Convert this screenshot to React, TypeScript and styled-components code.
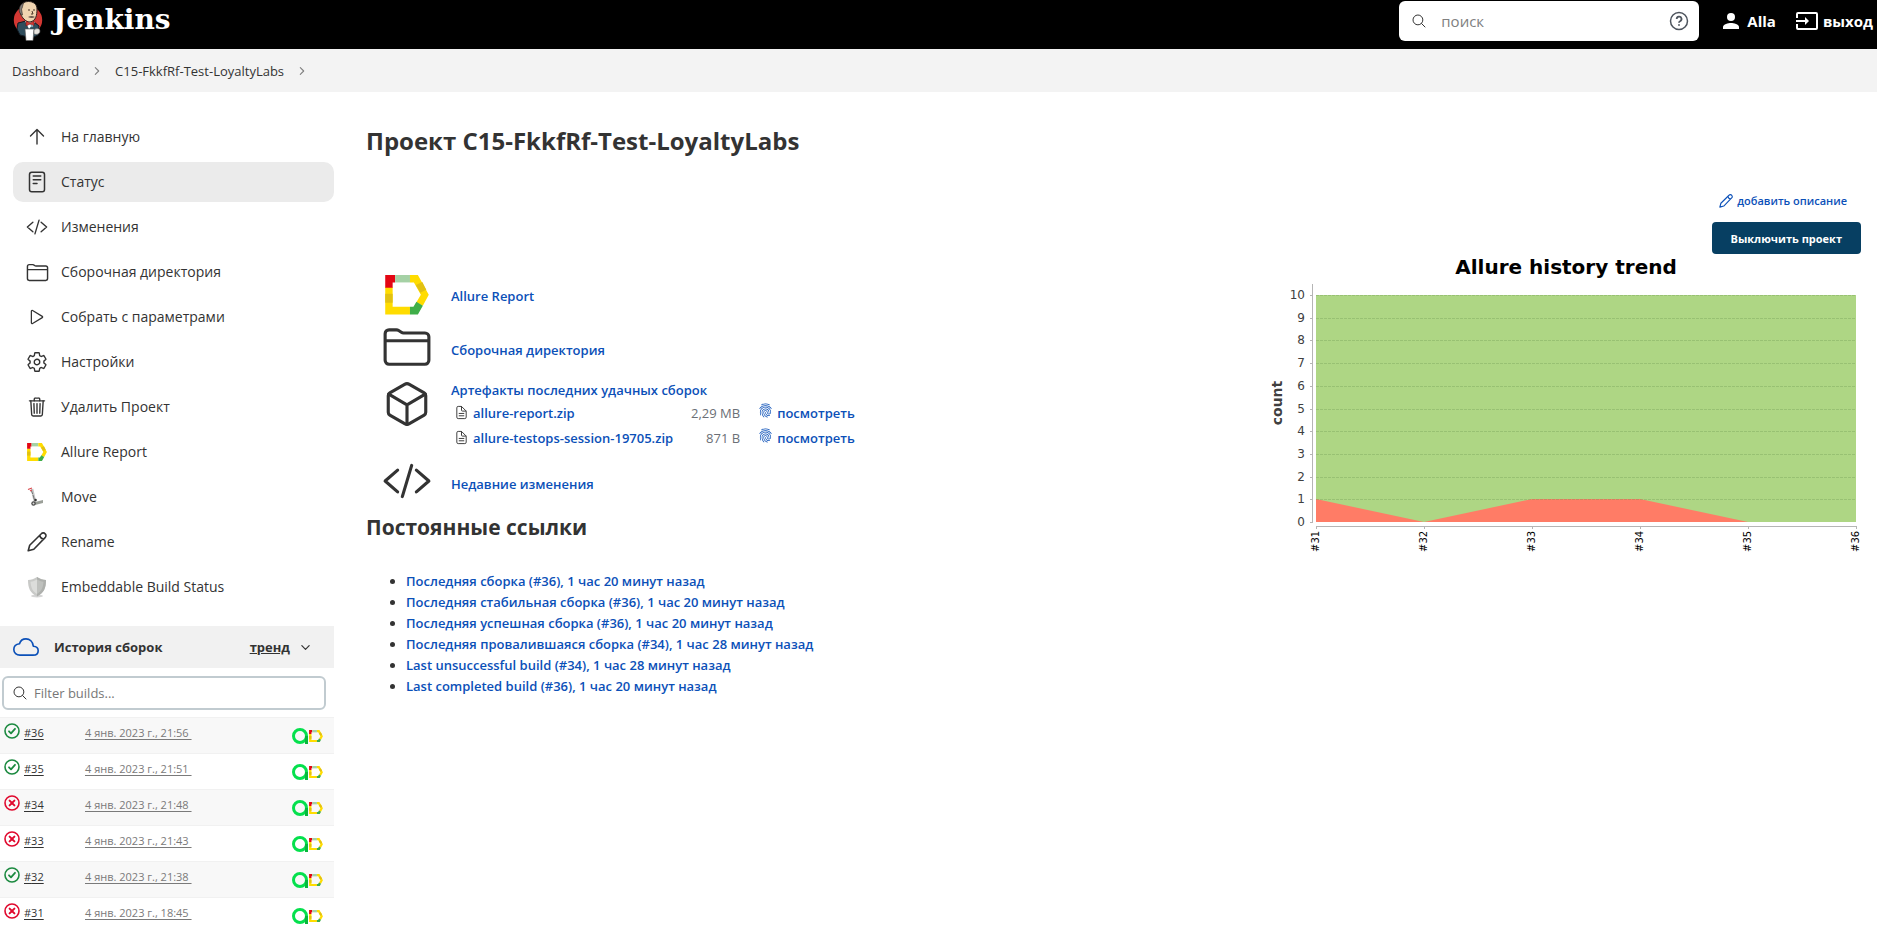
import React from 'react';
import styled, { createGlobalStyle } from 'styled-components';
import {
  IoReaderOutline,
  IoCodeSlashOutline,
  IoFolderOutline,
  IoPlayOutline,
  IoSettingsOutline,
  IoTrashOutline,
  IoCubeOutline,
  IoDocumentTextOutline,
  IoFingerPrintOutline,
  IoSearchOutline,
  IoCloudOutline,
  IoChevronForwardOutline,
  IoChevronDownOutline,
} from 'react-icons/io5';

const text = '#333333';
const link = '#0b50b8';

const GlobalStyle = createGlobalStyle`
  *, *::before, *::after { box-sizing: border-box; }
  body {
    margin: 0;
    background: #fff;
    color: ${text};
    font-family: "Open Sans", "Noto Sans", sans-serif;
    font-size: 13px;
    line-height: 20px;
  }
  a { color: inherit; text-decoration: none; }
  svg { display: block; flex: none; }
  input, button { font-family: inherit; }
`;

/* Header */

const TopBar = styled.header`
  display: flex;
  align-items: flex-start;
  height: 49px;
  padding: 0 4px 0 12px;
  background: #000;
  color: #fff;
`;

const Brand = styled.a`
  display: flex;
  gap: 9px;
  margin-right: auto;
  font-family: "DejaVu Serif", serif;
  font-size: 28px;
  font-weight: 700;
  line-height: 40px;
`;

const SearchForm = styled.form`
  display: flex;
  align-items: center;
  gap: 14px;
  width: 300px;
  height: 40px;
  margin-top: 1px;
  padding: 0 10px 0 12px;
  border-radius: 6px;
  background: #fff;
  color: ${text};
`;

const SearchInput = styled.input`
  flex: 1;
  min-width: 0;
  padding: 0;
  border: 0;
  outline: 0;
  background: none;
  font-size: 15px;
  &::placeholder { color: #808080; opacity: 1; }
`;

const HelpButton = styled.button`
  padding: 0;
  border: 0;
  background: none;
`;

const UserNav = styled.nav`
  display: flex;
  gap: 20px;
  margin-left: 24px;
  padding-top: 11px;
  font-size: 15px;
  font-weight: 700;
`;

const UserLink = styled.a<{ $gap: number }>`
  display: flex;
  align-items: center;
  gap: ${(p) => p.$gap}px;
`;

const Breadcrumbs = styled.nav`
  display: flex;
  align-items: center;
  gap: 12px;
  height: 43px;
  padding: 0 12px;
  background: #f3f3f3;
  svg { color: #808080; }
`;

/* Page */

const Page = styled.div`
  display: grid;
  grid-template-columns: 334px minmax(0, 1fr);
`;

const Tasks = styled.nav`
  display: flex;
  flex-direction: column;
  gap: 5px;
  padding: 25px 0 19px 13px;
`;

const Task = styled.a<{ $active?: boolean }>`
  display: flex;
  align-items: center;
  gap: 12px;
  height: 40px;
  padding: 0 12px;
  border-radius: 10px;
  font-size: 14px;
  background: ${(p) => (p.$active ? '#ebebeb' : 'transparent')};
`;

const IconBox = styled.span`
  display: flex;
  justify-content: center;
  width: 24px;
`;

const HistoryHead = styled.div`
  display: flex;
  align-items: center;
  height: 42px;
  padding: 0 22px 0 13px;
  background: #f1f1f1;
  font-weight: 700;
  svg:first-child { color: ${link}; margin-right: 15px; }
`;

const TrendLink = styled.a`
  margin: 0 9px 0 auto;
  text-decoration: underline;
`;

const FilterBox = styled.label`
  display: flex;
  align-items: center;
  gap: 6px;
  height: 34px;
  margin: 8px 8px 7px 2px;
  padding: 0 8px;
  border: 2px solid #c1cbd0;
  border-radius: 6px;
`;

const FilterInput = styled.input`
  flex: 1;
  min-width: 0;
  padding: 0;
  border: 0;
  outline: 0;
  background: none;
  font-size: 13px;
  &::placeholder { color: #777; opacity: 1; }
`;

const BuildTable = styled.table`
  width: 100%;
  border-collapse: collapse;
  font-size: 11px;
  line-height: 16px;
`;

const BuildRow = styled.tr`
  height: 36px;
  border-top: 1px solid #f1f1f1;
  &:nth-child(odd) { background: #f8f8f8; }
  td { padding: 5px 0 0; vertical-align: top; }
`;

const BuildName = styled.td`
  width: 85px;
`;

const BuildLabel = styled.span`
  display: flex;
  align-items: flex-start;
  gap: 4px;
  padding-left: 4px;
`;

const BuildLink = styled.a<{ $muted?: boolean }>`
  display: inline-block;
  padding-top: 2px;
  color: ${(p) => (p.$muted ? '#7a7a7a' : text)};
  text-decoration: underline;
  text-underline-offset: 2px;
`;

const Badges = styled.span`
  display: flex;
  justify-content: flex-end;
  align-items: center;
  gap: 1px;
  padding: 5px 11px 0 0;
`;

/* Project panel */

const Main = styled.main`
  padding: 33px 11px 0 32px;
`;

const Title = styled.h1`
  margin: 0 0 33px;
  font-size: 24px;
  font-weight: 700;
  line-height: 32px;
`;

const Body = styled.div`
  display: grid;
  grid-template-columns: minmax(0, 1fr) 600px;
`;

const Overview = styled.section`
  padding-top: 79px;
`;

const Entry = styled.div<{ $top?: boolean }>`
  display: flex;
  align-items: ${(p) => (p.$top ? 'flex-start' : 'center')};
  gap: 18px;
  min-height: 52px;
  padding: ${(p) => (p.$top ? '5px 0 5px 15px' : '0 0 0 15px')};
`;

const BigIcon = styled.span`
  display: flex;
  justify-content: center;
  align-items: center;
  width: 52px;
  height: 52px;
`;

const Label = styled.div<{ $drop: number }>`
  padding-top: ${(p) => p.$drop}px;
`;

const Link = styled.a`
  color: ${link};
  font-weight: 600;
`;

const Files = styled.table`
  border-collapse: collapse;
  tr { height: 25px; }
  td { padding: 0; }
`;

const FileIcon = styled.td`
  width: 22px;
  svg { margin-left: 3px; }
`;

const FileSize = styled.td`
  width: 67px;
  text-align: right;
  color: #6b6f76;
`;

const Inspect = styled(Link)`
  display: flex;
  align-items: flex-start;
  gap: 4px;
  margin-left: 18px;
`;

const SubTitle = styled.h2`
  margin: 5px 0 29px;
  font-size: 21px;
  font-weight: 700;
  line-height: 30px;
`;

const Permalinks = styled.ul`
  margin: 0;
  padding-left: 40px;
  line-height: 21px;
`;

const Side = styled.aside`
  display: flex;
  flex-direction: column;
  align-items: flex-end;
`;

const EditLink = styled(Link)`
  display: flex;
  align-items: center;
  gap: 4px;
  height: 22px;
  margin: 0 19px 10px 0;
  font-size: 11px;
`;

const DisableButton = styled.button`
  height: 32px;
  margin-right: 5px;
  padding: 0 19px;
  border: 0;
  border-radius: 4px;
  background: #073f62;
  color: #fff;
  font-size: 11px;
  font-weight: 700;
`;

/* Icons */

const Butler = () => (
  <svg width="32" height="42" viewBox="0 0 32 42" aria-hidden="true">
    <circle cx="16" cy="20" r="14.2" fill="#d33833" />
    <path d="M6 23l8-2 8 1 5 4-1 9-6 3-12-3-3-6z" fill="#2f4d5c" stroke="#101820" />
    <path d="M13 21l4 8 6-7-3-1z" fill="#fff" />
    <path d="M8 9c0-5 4-7.500 8.500-7.500S25 4 25 9c0 6-1 12-7 13-5 0-8-5-9.500-8z" fill="#efd4b0" stroke="#2b2320" />
    <path d="M7.500 12c-1-4 1-8 4-9-1 3-1 5-2 6l1 6c-1 0-2-1-3-3z" fill="#827c78" stroke="#2b2320" strokeWidth=".6" />
    <path d="M16 10h2M21 10h2M20 11l1 3h-2" stroke="#4a3728" fill="none" />
    <path d="M16 17c2-1.500 5-1.500 7 0-2 1.500-5 1-7 0z" fill="#6d5a4e" />
    <path d="M14 21l4 2 4-2v5l-4-2-4 2z" fill="#d33833" stroke="#6b1512" strokeWidth=".6" />
    <path d="M13 29h9l-1 11.500h-7z" fill="#fff" stroke="#555" strokeWidth=".6" />
    <path d="M22 30c2-2 6-2 6 1s-3 4-6 3z" fill="#e6e3de" stroke="#555" strokeWidth=".6" />
    <circle cx="20" cy="26" r="1.300" fill="#7fa4b5" />
  </svg>
);

const ArrowUp = () => (
  <svg width="20" height="20" viewBox="0 0 20 20" fill="none" stroke="currentColor" strokeWidth="1.400" strokeLinecap="round" strokeLinejoin="round" aria-hidden="true">
    <path d="M3.500 9L10 2.500 16.500 9M10 2.500v14.500" />
  </svg>
);

const Help = () => (
  <svg width="20" height="20" viewBox="0 0 20 20" fill="none" stroke="#4d545d">
    <circle cx="10" cy="10" r="8.500" strokeWidth="1.500" />
    <path d="M7.700 8a2.400 2.400 0 1 1 3.400 2.200c-.8.4-1.100.8-1.100 1.500" strokeWidth="1.800" />
    <circle cx="10" cy="14" r=".6" strokeWidth="1" />
  </svg>
);

const Person = () => (
  <svg width="16" height="16" viewBox="0 0 16 16" fill="#fff" aria-hidden="true">
    <circle cx="8" cy="4" r="4" />
    <path d="M0 16v-2c0-2.700 5.300-4 8-4s8 1.300 8 4v2z" />
  </svg>
);

const Exit = () => (
  <svg width="22" height="18" viewBox="0 0 22 18" fill="none" stroke="#fff" strokeWidth="2" aria-hidden="true">
    <path d="M1 6V2q0-1 1-1h18q1 0 1 1v14q0 1-1 1H2q-1 0-1-1v-4M0 9h11" />
    <path d="M9 5l4 4-4 4z" fill="#fff" stroke="none" />
  </svg>
);

const Pencil = ({ size }: { size: number }) => (
  <svg width={size} height={size} viewBox="0 0 20 20" fill="none" stroke="currentColor" strokeWidth="1.600" strokeLinejoin="round" aria-hidden="true">
    <path d="M1.200 18.800l1.500-5.600L14.300 1.800a2.500 2.500 0 0 1 3.900.1 2.500 2.500 0 0 1-.1 3.700L6.800 17.200zM12.700 3.400c.4 2 1.700 3.400 3.900 3.800" />
  </svg>
);

const Allure = ({ width }: { width: number }) => (
  <svg width={width} height={width * 0.9} viewBox="0 0 44 40" aria-hidden="true">
    <path d="M0 12h7.500v20H25v8H0z" fill="#ffdc00" />
    <path d="M0 19h7.500v9H0z" fill="#e2c112" />
    <path d="M0 0h10v7.500H7.500V13H0z" fill="#e30613" />
    <path d="M10 0h15v7.500H10z" fill="#a5d1a5" />
    <path d="M25 0h8l11 20-6 11-6.500-3.500L36 20 29 7.500h-4z" fill="#ffdc00" />
    <path d="M31 10l6.500-3 4 8-6 3z" fill="#e2c112" />
    <path d="M25 32h3.500l3-5 6.500 4-5 9h-8z" fill="#3fae49" />
  </svg>
);

const TestOps = () => (
  <svg width="16" height="16" viewBox="0 0 16 16" fill="none" aria-hidden="true">
    <circle cx="8" cy="8" r="6.500" stroke="#05e04d" strokeWidth="3" />
    <path d="M14.500 8v8" stroke="#06b83c" strokeWidth="3" />
  </svg>
);

const HandTruck = () => (
  <svg width="20" height="20" viewBox="0 0 20 20" fill="none" aria-hidden="true">
    <path d="M5 2l3 13" stroke="#c4c4c4" strokeWidth="2.600" />
    <path d="M4.500 4l1.200 3M6 8l1.200 4" stroke="#777" strokeWidth="1" />
    <path d="M1 2.500l4-1.500M3 4l2-1" stroke="#d9474c" strokeWidth="1.200" />
    <path d="M8 15l8-2v3l-8 2z" fill="#9b9f98" />
    <circle cx="6.500" cy="16.500" r="2.200" fill="#4b4b4b" />
    <circle cx="6.500" cy="16.500" r="1" fill="#ddd" />
    <circle cx="8.500" cy="13" r="1.300" fill="#333" />
  </svg>
);

const Shield = () => (
  <svg width="20" height="21" viewBox="0 0 20 21" aria-hidden="true">
    <ellipse cx="10" cy="19" rx="6" ry="1.500" fill="#d5d5d5" />
    <path d="M10 0c3 2 6 3 9 3 0 8-2 13-9 16.500C3 16 1 11 1 3c3 0 6-1 9-3z" fill="#c9cac8" />
    <path d="M10 0c3 2 6 3 9 3 0 8-2 13-9 16.500z" fill="#aeb0ad" />
    <path d="M10 2.500c2 1.300 4 2 6.500 2.300C16 10 15 14 10 17z" fill="#bfc1be" />
    <path d="M10 2.500C8 3.800 6 4.500 3.500 4.800 4 10 5 14 10 17z" fill="#dcdddb" />
  </svg>
);

const Status = ({ ok }: { ok: boolean }) => (
  <svg width="16" height="16" viewBox="0 0 16 16" fill="none" stroke={ok ? '#1c8a40' : '#e0092e'} strokeLinecap="round" strokeLinejoin="round" role="img" aria-label={ok ? 'Success' : 'Failed'}>
    <circle cx="8" cy="8" r="7" strokeWidth="1.600" />
    {ok ? <path d="M5 8.300l2 2 4-4.500" strokeWidth="1.800" /> : <path d="M5.600 5.600l4.800 4.800M10.400 5.600l-4.800 4.800" strokeWidth="2" />}
  </svg>
);

/* Chart */

const failed = [1, 0, 1, 1, 0, 0];
const total = 10;
const plot = { left: 50, right: 590, top: 41, bottom: 268 };
const px = (i: number) => plot.left + (i * (plot.right - plot.left)) / (failed.length - 1);
const py = (v: number) => Math.round(plot.bottom - (v * (plot.bottom - plot.top)) / total);

const ChartSvg = styled.svg`
  font-family: "DejaVu Sans", sans-serif;
`;

const Trend = () => (
  <ChartSvg width="600" height="300" viewBox="0 0 600 300">
    <text x="300" y="20" textAnchor="middle" fontSize="20" fontWeight="700" fill="#000">Allure history trend</text>
    <text transform="translate(16 149) rotate(-90)" textAnchor="middle" fontSize="14" fontWeight="700" fill="#404040">count</text>
    <rect x={plot.left} y={plot.top} width={plot.right - plot.left} height={plot.bottom - plot.top} fill="#aed684" />
    <polygon points={[`${plot.left},${plot.bottom}`, ...failed.map((v, i) => `${px(i)},${py(v)}`)].join(' ')} fill="#ff7c66" />
    <g shapeRendering="crispEdges">
      {Array.from({ length: total + 1 }, (_, v) => (
        <React.Fragment key={v}>
          <line x1="44" x2="47" y1={py(v) + 0.5} y2={py(v) + 0.5} stroke="#b5b5b5" />
          {v > 0 && <line x1={plot.left} x2={plot.right} y1={py(v) + 0.5} y2={py(v) + 0.5} stroke="#6f9a52" strokeOpacity=".35" strokeDasharray="3 1" />}
        </React.Fragment>
      ))}
      <line x1="46.5" x2="46.5" y1="30" y2="268" stroke="#b5b5b5" />
      <line x1="50" x2="591" y1="272.5" y2="272.5" stroke="#b5b5b5" />
      {failed.map((_, i) => (
        <line key={i} x1={px(i) + 0.5} x2={px(i) + 0.5} y1="272" y2="275" stroke="#b5b5b5" />
      ))}
    </g>
    {Array.from({ length: total + 1 }, (_, v) => (
      <text key={v} x="39" y={py(v) + 4} textAnchor="end" fontSize="12" fill="#404040">{v}</text>
    ))}
    {failed.map((_, i) => (
      <text key={i} transform={`translate(${px(i) + 3} 298) rotate(-90)`} fontSize="10" fill="#000">{`#${31 + i}`}</text>
    ))}
  </ChartSvg>
);

/* Data */

const tasks: { label: string; icon: React.ReactNode; active?: boolean }[] = [
  { label: 'На главную', icon: <ArrowUp /> },
  { label: 'Статус', icon: <IoReaderOutline size={24} />, active: true },
  { label: 'Изменения', icon: <IoCodeSlashOutline size={22} /> },
  { label: 'Сборочная директория', icon: <IoFolderOutline size={23} /> },
  { label: 'Собрать с параметрами', icon: <IoPlayOutline size={20} /> },
  { label: 'Настройки', icon: <IoSettingsOutline size={22} /> },
  { label: 'Удалить Проект', icon: <IoTrashOutline size={22} /> },
  { label: 'Allure Report', icon: <Allure width={20} /> },
  { label: 'Move', icon: <HandTruck /> },
  { label: 'Rename', icon: <Pencil size={20} /> },
  { label: 'Embeddable Build Status', icon: <Shield /> },
];

const builds = [
  { id: 36, time: '21:56', ok: true },
  { id: 35, time: '21:51', ok: true },
  { id: 34, time: '21:48', ok: false },
  { id: 33, time: '21:43', ok: false },
  { id: 32, time: '21:38', ok: true },
  { id: 31, time: '18:45', ok: false },
];

const artifacts = [
  { name: 'allure-report.zip', size: '2,29 MB' },
  { name: 'allure-testops-session-19705.zip', size: '871 B' },
];

const permalinks = [
  'Последняя сборка (#36), 1 час 20 минут назад',
  'Последняя стабильная сборка (#36), 1 час 20 минут назад',
  'Последняя успешная сборка (#36), 1 час 20 минут назад',
  'Последняя провалившаяся сборка (#34), 1 час 28 минут назад',
  'Last unsuccessful build (#34), 1 час 28 минут назад',
  'Last completed build (#36), 1 час 20 минут назад',
];

export default function App() {
  return (
    <>
      <GlobalStyle />
      <TopBar>
        <Brand href="#">
          <Butler />
          Jenkins
        </Brand>
        <SearchForm role="search">
          <IoSearchOutline size={16} />
          <SearchInput type="text" placeholder="поиск" aria-label="поиск" />
          <HelpButton type="button" aria-label="Help">
            <Help />
          </HelpButton>
        </SearchForm>
        <UserNav>
          <UserLink href="#" $gap={8}>
            <Person />
            Alla
          </UserLink>
          <UserLink href="#" $gap={5}>
            <Exit />
            выход
          </UserLink>
        </UserNav>
      </TopBar>
      <Breadcrumbs>
        <a href="#">Dashboard</a>
        <IoChevronForwardOutline size={12} />
        <a href="#">C15-FkkfRf-Test-LoyaltyLabs</a>
        <IoChevronForwardOutline size={12} />
      </Breadcrumbs>
      <Page>
        <div>
          <Tasks>
            {tasks.map((t) => (
              <Task key={t.label} href="#" $active={t.active}>
                <IconBox>{t.icon}</IconBox>
                {t.label}
              </Task>
            ))}
          </Tasks>
          <HistoryHead>
            <IoCloudOutline size={26} />
            История сборок
            <TrendLink href="#">тренд</TrendLink>
            <IoChevronDownOutline size={13} />
          </HistoryHead>
          <FilterBox>
            <IoSearchOutline size={16} />
            <FilterInput type="text" placeholder="Filter builds..." aria-label="Filter builds" />
          </FilterBox>
          <BuildTable>
            <tbody>
              {builds.map((b) => (
                <BuildRow key={b.id}>
                  <BuildName>
                    <BuildLabel>
                      <Status ok={b.ok} />
                      <BuildLink href="#">#{b.id}</BuildLink>
                    </BuildLabel>
                  </BuildName>
                  <td>
                    <BuildLink href="#" $muted>{`4 янв. 2023 г., ${b.time}\u00a0`}</BuildLink>
                  </td>
                  <td>
                    <Badges>
                      <TestOps />
                      <Allure width={14} />
                    </Badges>
                  </td>
                </BuildRow>
              ))}
            </tbody>
          </BuildTable>
        </div>
        <Main>
          <Title>Проект C15-FkkfRf-Test-LoyaltyLabs</Title>
          <Body>
            <Overview>
              <Entry>
                <BigIcon><Allure width={44} /></BigIcon>
                <Label $drop={2}><Link href="#">Allure Report</Link></Label>
              </Entry>
              <Entry>
                <BigIcon><IoFolderOutline size={50} /></BigIcon>
                <Label $drop={6}><Link href="#">Сборочная директория</Link></Label>
              </Entry>
              <Entry $top>
                <BigIcon><IoCubeOutline size={50} /></BigIcon>
                <Label $drop={2}>
                  <Link href="#">Артефакты последних удачных сборок</Link>
                  <Files>
                    <tbody>
                      {artifacts.map((a) => (
                        <tr key={a.name}>
                          <FileIcon><IoDocumentTextOutline size={15} /></FileIcon>
                          <td><Link href="#">{a.name}</Link></td>
                          <FileSize>{a.size}</FileSize>
                          <td>
                            <Inspect href="#">
                              <IoFingerPrintOutline size={15} />
                              посмотреть
                            </Inspect>
                          </td>
                        </tr>
                      ))}
                    </tbody>
                  </Files>
                </Label>
              </Entry>
              <Entry>
                <BigIcon><IoCodeSlashOutline size={50} /></BigIcon>
                <Label $drop={6}><Link href="#">Недавние изменения</Link></Label>
              </Entry>
              <SubTitle>Постоянные ссылки</SubTitle>
              <Permalinks>
                {permalinks.map((p) => (
                  <li key={p}><Link href="#">{p}</Link></li>
                ))}
              </Permalinks>
            </Overview>
            <Side>
              <EditLink href="#">
                <Pencil size={14} />
                добавить описание
              </EditLink>
              <DisableButton type="button">Выключить проект</DisableButton>
              <Trend />
            </Side>
          </Body>
        </Main>
      </Page>
    </>
  );
}
